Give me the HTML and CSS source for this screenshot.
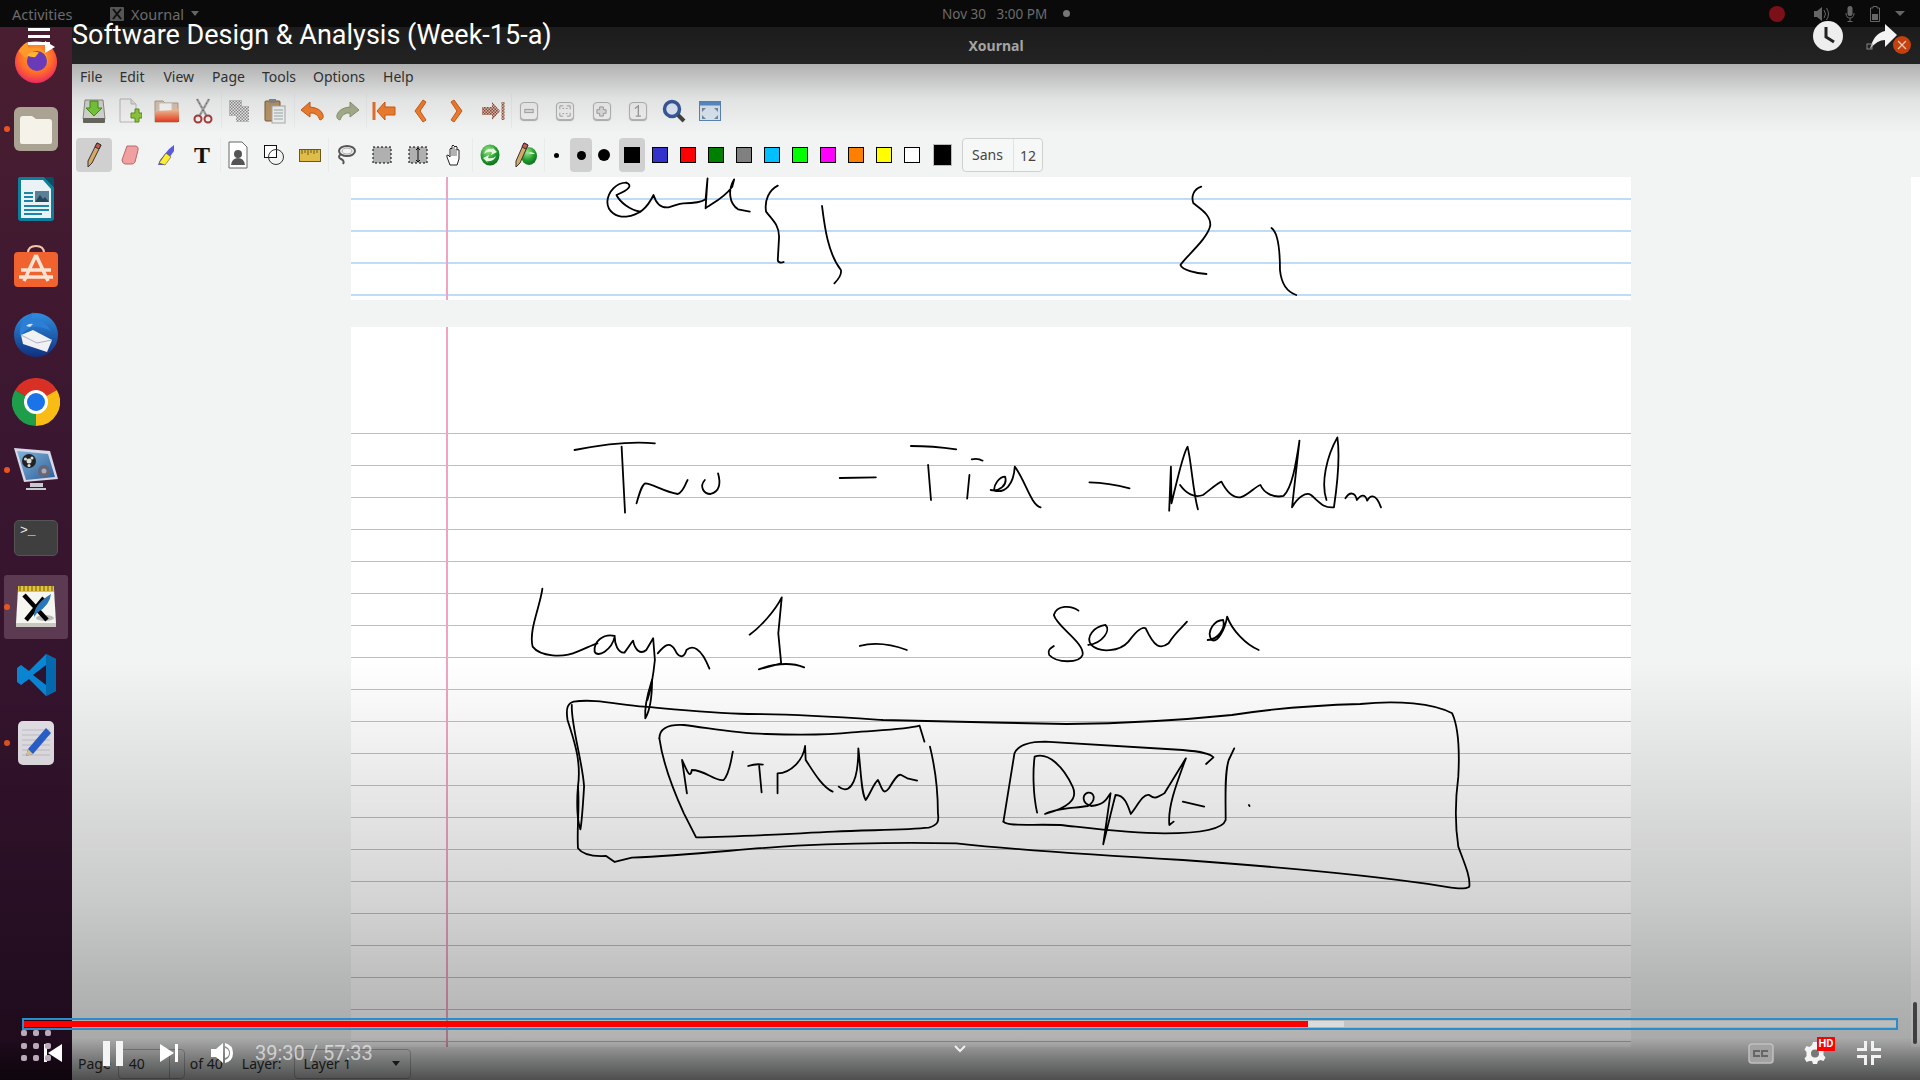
FILE: index.html
```html
<!DOCTYPE html>
<html lang="en">
<head>
    <meta charset="UTF-8">
    <title>Software Design &amp; Analysis (Week-15-a)</title>
    <link rel="stylesheet" href="styles.css">
</head>
<body>
    <svg class="defs">
        <defs>
            <pattern id="dither" width="3" height="3" patternUnits="userSpaceOnUse">
                <rect width="3" height="3" fill="#ececec"/>
                <rect width="1.5" height="1.5" fill="#8c8c8c"/>
                <rect x="1.5" y="1.5" width="1.5" height="1.5" fill="#8c8c8c"/>
            </pattern>
            <pattern id="ditherRed" width="3" height="3" patternUnits="userSpaceOnUse">
                <rect width="3" height="3" fill="#d9c0b0"/>
                <rect width="1.5" height="1.5" fill="#8c4a3a"/>
                <rect x="1.5" y="1.5" width="1.5" height="1.5" fill="#8c4a3a"/>
            </pattern>
            <radialGradient id="fox" cx="50%" cy="38%" r="65%">
                <stop offset="0" stop-color="#ffb52e"/>
                <stop offset=".6" stop-color="#ff6a2a"/>
                <stop offset="1" stop-color="#e8206a"/>
            </radialGradient>
            <radialGradient id="orb" cx="40%" cy="30%" r="75%">
                <stop offset="0" stop-color="#9fe58a"/>
                <stop offset=".6" stop-color="#1f9a2e"/>
                <stop offset="1" stop-color="#0c6a1c"/>
            </radialGradient>
            <linearGradient id="bird" x1="0" y1="0" x2="0" y2="1">
                <stop offset="0" stop-color="#2f8fe0"/>
                <stop offset="1" stop-color="#10307f"/>
            </linearGradient>
            <linearGradient id="folder" x1="0" y1="0" x2="0" y2="1">
                <stop offset="0" stop-color="#f8c8a0"/>
                <stop offset="1" stop-color="#e6391c"/>
            </linearGradient>
            <linearGradient id="screen" x1="0" y1="0" x2="1" y2="1">
                <stop offset="0" stop-color="#7fb4dc"/>
                <stop offset="1" stop-color="#2f5f98"/>
            </linearGradient>
        </defs>
    </svg>

    <div class="panel">
        <span class="panel-activities">Activities</span>
        <span class="panel-app">
            <svg width="14" height="14" viewBox="0 0 14 14"><rect width="14" height="14" rx="1" fill="#555"/><path d="M3 2l8 10M11 2L3 12" stroke="#111" stroke-width="2"/></svg>
            Xournal
            <i class="caret"></i>
        </span>
        <span class="panel-clock">Nov 30&nbsp;&nbsp;&nbsp;3:00 PM<i class="clock-dot"></i></span>
        <span class="panel-tray">
            <i class="rec-dot"></i>
            <svg width="16" height="14" viewBox="0 0 16 14"><path d="M0 4h3l5-4v14l-5-4H0z" fill="#666"/><path d="M10 3q3 4 0 8M12.500 1q4 6 0 12" fill="none" stroke="#666"/></svg>
            <svg width="10" height="16" viewBox="0 0 10 16"><rect x="2.500" width="5" height="10" rx="2.500" fill="#666"/><path d="M1 7q0 5 4 5t4-5M5 12v3M2.500 15.500h5" fill="none" stroke="#666"/></svg>
            <svg width="10" height="16" viewBox="0 0 10 16"><path d="M3 .5h4v1.500h2.500v13.500H.5V2H3z" fill="none" stroke="#666"/><rect x="2" y="8" width="6" height="6" fill="#666"/></svg>
            <i class="caret tray-caret"></i>
        </span>
    </div>

    <div class="desktop">
        <div class="dock">
            <div class="dock-item">
                <svg width="46" height="46" viewBox="0 0 48 48"><circle cx="24" cy="25" r="22" fill="url(#fox)"/><path d="M6 14q4-8 10-10-2 5 2 7 8-2 13 2 6 5 5 13l-10-8-14 2z" fill="#ff9a2a"/><circle cx="25" cy="24" r="10.500" fill="#6a3ab8"/><path d="M14 18q6-5 13-3l-4 5q-5 0-9-2z" fill="#ffb52e"/></svg>
            </div>
            <div class="dock-item running">
                <svg width="46" height="46" viewBox="0 0 46 46"><rect x="1" y="1" width="44" height="44" rx="6" fill="#aaa393"/><path d="M7 13q0-3 3-3h9l4 3h13q3 0 3 3v20q0 2-2 2H9q-2 0-2-2z" fill="#f5f2ea"/></svg>
            </div>
            <div class="dock-item">
                <svg class="nudge-down" width="38" height="46" viewBox="0 0 38 46"><path d="M3 1h24l10 10v31q0 3-3 3H4q-3 0-3-3V3q0-2 2-2z" fill="#0f7d9c"/><path d="M28 1h7q2 0 2 2v8z" fill="#0b4f66"/><path d="M4 4h22l8 9v29H4z" fill="#eaf2f6"/><path d="M7 17h9M7 21h9M7 25h9M7 30h25M7 34h25M7 38h18" stroke="#1c86a8" stroke-width="2"/><rect x="18" y="15" width="14" height="11" fill="#5a7f96"/><path d="M18 26l5-7 3 4 2-2 4 5z" fill="#26485c"/></svg>
            </div>
            <div class="dock-item">
                <svg width="46" height="46" viewBox="0 0 46 46"><path d="M15 10q0-7 8-7t8 7" fill="none" stroke="#f3c6a8" stroke-width="2"/><rect x="1" y="9" width="44" height="35" rx="4" fill="#f0622e"/><path d="M23 12L11 38M23 12l12 26M8 27h30M6 34h34" fill="none" stroke="#fce3d4" stroke-width="3.500"/></svg>
            </div>
            <div class="dock-item">
                <svg width="48" height="48" viewBox="0 0 48 48"><circle cx="24" cy="25" r="22" fill="url(#bird)"/><path d="M8 26Q6 10 22 2q-4 5-2 7 12 0 19 12-12-6-20-4-5 3-11 9z" fill="#2b7fd6"/><path d="M14 16q3-3 7-2l-3 3z" fill="#cfe4f8"/><path d="M9 25l12-5 19 10-5 12-24-8z" fill="#f1f1f4"/><path d="M9 25l16 8 15-3" fill="none" stroke="#aab0c4"/></svg>
            </div>
            <div class="dock-item">
                <svg width="48" height="48" viewBox="0 0 48 48"><path d="M24 24L3.200 12A24 24 0 0 1 44.800 12z" fill="#d93025"/><path d="M24 24L44.800 12A24 24 0 0 1 24 48z" fill="#f9bc15"/><path d="M24 24L24 48A24 24 0 0 1 3.200 12z" fill="#1e9e4a"/><circle cx="24" cy="24" r="12" fill="#fff"/><circle cx="24" cy="24" r="9" fill="#1a73e8"/></svg>
            </div>
            <div class="dock-item running">
                <svg width="46" height="46" viewBox="0 0 46 46"><path d="M1 1l36 3 8 28-34 3z" fill="#d8d8e8"/><path d="M4 4l31 3 7 23-29 3z" fill="url(#screen)"/><circle cx="16" cy="14" r="7" fill="#222"/><circle cx="16" cy="14" r="2.500" fill="#ddd"/><circle cx="12.500" cy="12" r="1.500" fill="#ddd"/><circle cx="19" cy="11" r="1.500" fill="#ddd"/><circle cx="16" cy="18.500" r="1.500" fill="#ddd"/><circle cx="31" cy="24" r="6" fill="#667"/><circle cx="31" cy="24" r="2.500" fill="#aab"/><path d="M17 36h13v4H17zM13 41h20v2H13z" fill="#c8c8d0"/></svg>
            </div>
            <div class="dock-item">
                <div class="terminal-icon">&gt;_</div>
            </div>
            <div class="dock-item running selected">
                <svg width="42" height="44" viewBox="0 0 42 44"><path d="M3 4h36l2 34H1z" fill="#f6f6f0"/><path d="M1 38h40v4H1z" fill="#c8c8c0"/><rect x="3" y="1" width="36" height="6" fill="#e4c43a"/><path d="M5 1v5M9 1v5M13 1v5M17 1v5M21 1v5M25 1v5M29 1v5M33 1v5M37 1v5" stroke="#6a5a10"/><ellipse cx="30" cy="33" rx="9" ry="3" fill="#bbb"/><path d="M9 10l23 25M29 13L11 35" stroke="#000" stroke-width="4.500"/><path d="M36 9q-1 11-14 19l-3 4q-1-12 17-23z" fill="#2a76b8"/></svg>
            </div>
            <div class="dock-item">
                <svg width="44" height="44" viewBox="0 0 44 44"><path d="M32 1l10 5v32l-10 5-17-17-8 6-4-3V15l4-3 8 6z" fill="#0a86d4"/><path d="M32 1l10 5v32l-10 5z" fill="#0569b0"/><path d="M32 12L19 22l13 10z" fill="#2c1430"/></svg>
            </div>
            <div class="dock-item running">
                <svg width="38" height="46" viewBox="0 0 38 46"><rect x="1" y="1" width="36" height="44" rx="5" fill="#e8e6ea"/><path d="M5 10h28M5 15h28M5 20h28M5 25h28M5 30h28M5 35h28" stroke="#c4c4cc"/><path d="M29 8l5 5-18 21-7 2 2-7z" fill="#2a62d0"/><path d="M11 29l-2 7 7-2z" fill="#e8c89a"/></svg>
            </div>
        </div>

        <div class="window">
            <div class="titlebar">Xournal</div>

            <div class="menubar">
                <span>File</span><span>Edit</span><span>View</span><span>Page</span><span>Tools</span><span>Options</span><span>Help</span>
            </div>

            <div class="toolbar toolbar-main">
                <div class="tool"><svg width="26" height="26" viewBox="0 0 26 26"><path d="M4 2h18l2 19H2z" fill="#d4d6d0" stroke="#8a8a84"/><rect x="2" y="20" width="22" height="5" rx="1" fill="#66665f"/><path d="M9 3h8v7h4l-8 8-8-8h4z" fill="#76c83a" stroke="#4a8a1c"/></svg></div>
                <div class="tool"><svg width="24" height="26" viewBox="0 0 24 26"><path d="M2 1h11l5 5v18H2z" fill="#f2f2f2" stroke="#b8b8b8"/><path d="M13 1v5h5" fill="#ddd" stroke="#b8b8b8"/><path d="M13 15h4v-4h4v4h3v5h-3v4h-4v-4h-4z" fill="#8cc83c" stroke="#5c8c1c"/></svg></div>
                <div class="tool"><svg width="26" height="24" viewBox="0 0 26 24"><path d="M1 2h8l2 2h13v19H1z" fill="#d8c4b0" stroke="#b89a80"/><rect x="5" y="4" width="13" height="12" fill="#f8f8f8" stroke="#ccc"/><path d="M1 12l19-1 5-1v13H1z" fill="url(#folder)"/></svg></div>
                <div class="tool group-end"><svg width="20" height="26" viewBox="0 0 20 26"><path d="M4 1l9 16M16 1L7 17" stroke="#aaa" stroke-width="2.500"/><path d="M4 1l9 16M16 1L7 17" stroke="#777" stroke-width="1" stroke-dasharray="2 2"/><circle cx="5" cy="21" r="3.500" fill="none" stroke="#a83a3a" stroke-width="2"/><circle cx="15" cy="21" r="3.500" fill="none" stroke="#a83a3a" stroke-width="2"/></svg></div>
                <div class="tool"><svg width="22" height="24" viewBox="0 0 22 24"><rect x="1" y="1" width="13" height="16" fill="url(#dither)"/><rect x="8" y="7" width="13" height="16" fill="url(#dither)"/></svg></div>
                <div class="tool group-end"><svg width="22" height="26" viewBox="0 0 22 26"><rect x="1" y="3" width="15" height="20" rx="1" fill="#b89468" stroke="#7a5a38"/><rect x="5" y="1" width="7" height="4" fill="#888"/><rect x="8" y="8" width="13" height="17" fill="#f2f2f2" stroke="#aaa"/><path d="M10 12h9M10 15h9M10 18h9M10 21h9" stroke="#9aa"/></svg></div>
                <div class="tool"><svg width="24" height="20" viewBox="0 0 24 20"><path d="M10 1L1 9l9 7v-4q7-1 10 7 4-1 3-5-2-7-13-8z" fill="#f08030" stroke="#c85a14"/></svg></div>
                <div class="tool group-end"><svg width="24" height="20" viewBox="0 0 24 20"><path d="M14 1l9 8-9 7v-4q-7-1-10 7-4-1-3-5 2-7 13-8z" fill="#a6b08c" stroke="#8a9470"/></svg></div>
                <div class="tool"><svg width="24" height="20" viewBox="0 0 24 20"><path d="M2 1v18" stroke="#e8702a" stroke-width="3"/><path d="M13 1L5 10l8 9v-5h10V6H13z" fill="#f08030" stroke="#d05a14"/></svg></div>
                <div class="tool"><svg width="14" height="24" viewBox="0 0 14 24"><path d="M10 1L2 12l8 11 3-2-6-9 6-9z" fill="#f08030" stroke="#d05a14"/></svg></div>
                <div class="tool"><svg width="14" height="24" viewBox="0 0 14 24"><path d="M4 1l8 11-8 11-3-2 6-9-6-9z" fill="#f08030" stroke="#d05a14"/></svg></div>
                <div class="tool group-end"><svg width="24" height="20" viewBox="0 0 24 20"><path d="M22 1v18" stroke="url(#ditherRed)" stroke-width="3"/><path d="M11 1l8 9-8 9v-5H1V6h10z" fill="url(#ditherRed)"/></svg></div>
                <div class="tool"><div class="zoom-btn"><svg width="10" height="10" viewBox="0 0 12 12"><rect x="1" y="4" width="10" height="4" fill="#ddd" stroke="#999"/></svg></div></div>
                <div class="tool"><div class="zoom-btn"><svg width="12" height="12" viewBox="0 0 14 14"><path d="M1 5V1h4M9 1h4v4M13 9v4H9M5 13H1V9M4 4h2M8 4h2M4 10h2M8 10h2" fill="none" stroke="#999"/></svg></div></div>
                <div class="tool"><div class="zoom-btn"><svg width="11" height="11" viewBox="0 0 12 12"><path d="M4 1h4v3h3v4H8v3H4V8H1V4h3z" fill="#ddd" stroke="#999"/></svg></div></div>
                <div class="tool"><div class="zoom-btn"><svg width="9" height="12" viewBox="0 0 10 14"><path d="M2 4l4-3v12M3 13h6" fill="none" stroke="#999" stroke-width="1.500"/></svg></div></div>
                <div class="tool"><svg width="24" height="24" viewBox="0 0 24 24"><circle cx="10" cy="10" r="7.500" fill="#dfe8f6" stroke="#3a5a9c" stroke-width="3.500"/><path d="M16 16l6 6" stroke="#444" stroke-width="4"/></svg></div>
                <div class="tool"><svg width="22" height="20" viewBox="0 0 22 20"><rect x=".5" y=".5" width="21" height="19" fill="#dbe6f2" stroke="#5a84b8"/><rect x=".5" y=".5" width="21" height="4" fill="#5a8cc8"/><path d="M3 7l4 0-4 4zM19 7l-4 0 4 4zM3 18l0-4 4 4zM19 18l0-4-4 4z" fill="#7a8a98"/></svg></div>
            </div>

            <div class="toolbar toolbar-draw">
                <div class="tool active"><svg width="16" height="26" viewBox="0 0 16 26"><path d="M11 1l4 2-9 18-4 4 0-6z" fill="#d8a868" stroke="#333"/><path d="M11 1l4 2-2 4-4-2z" fill="#c85a50" stroke="#333"/></svg></div>
                <div class="tool"><svg width="18" height="20" viewBox="0 0 18 20"><path d="M6 1h9q3 1 2 4l-3 12q-1 2-3 2H4q-3-1-3-4z" fill="#f0a0a0" stroke="#b86868"/></svg></div>
                <div class="tool"><svg width="18" height="22" viewBox="0 0 18 22"><path d="M12 5l5-4v6L7 21H1l2-5z" fill="#5a5ae0"/><path d="M9 9l5 4-6 8-6-2z" fill="#ffee30" stroke="#333" stroke-width=".5"/></svg></div>
                <div class="tool group-end"><span class="text-tool">T</span></div>
                <div class="tool"><svg width="20" height="28" viewBox="0 0 20 28"><path d="M1 1h13l5 5v21H1z" fill="#fff" stroke="#666"/><circle cx="10" cy="13" r="4" fill="#555"/><path d="M3 24q1-7 7-7t7 7z" fill="#555"/></svg></div>
                <div class="tool"><svg width="20" height="20" viewBox="0 0 20 20"><rect x=".5" y=".5" width="12" height="12" fill="#fff" stroke="#111"/><circle cx="12" cy="12" r="7.500" fill="none" stroke="#333"/></svg></div>
                <div class="tool group-end"><svg width="22" height="13" viewBox="0 0 22 13"><rect x=".5" y=".5" width="21" height="12" fill="#e0bc48" stroke="#6a5a18"/><path d="M3 1v4M6 1v3M9 1v5M12 1v3M15 1v4M18 1v3" stroke="#6a5a18"/></svg></div>
                <div class="tool"><svg width="20" height="22" viewBox="0 0 20 22"><ellipse cx="11" cy="7" rx="8" ry="5" fill="none" stroke="#555" stroke-width="2"/><ellipse cx="11" cy="7" rx="5" ry="3" fill="none" stroke="#aaa"/><path d="M5 10q-4 3 0 5t2 5" fill="none" stroke="#555" stroke-width="2"/></svg></div>
                <div class="tool"><svg width="20" height="18" viewBox="0 0 20 18"><rect x="1" y="1" width="18" height="16" fill="#b0b0b0" stroke="#000" stroke-dasharray="2 2"/></svg></div>
                <div class="tool"><svg width="20" height="18" viewBox="0 0 20 18"><rect x="1" y="1" width="18" height="16" fill="#b0b0b0" stroke="#000" stroke-dasharray="2 2" stroke-width="1"/><path d="M10 2v14M8 4l2-2 2 2M8 14l2 2 2-2" fill="none" stroke="#111"/></svg></div>
                <div class="tool group-end"><svg width="16" height="22" viewBox="0 0 16 22"><path d="M4 21l-3-8q-1-2 1-2l2 2V5q1-2 2 0V2q1-2 2 0l1 1q1-2 2 0v3q1-1 2 0v9l-2 6z" fill="#fff" stroke="#222"/><path d="M6 5v7M8 3v9M10 5v7" stroke="#222" stroke-width=".7"/></svg></div>
                <div class="tool"><svg width="20" height="22" viewBox="0 0 20 22"><ellipse cx="10" cy="11" rx="9.500" ry="10.500" fill="url(#orb)"/><path d="M4 10q2-6 9-5l-1-2 5 5-6 3 1-3q-5-1-8 2zM16 12q-2 6-9 5l1 2-5-5 6-3-1 3q5 1 8-2z" fill="#e8f8e0"/></svg></div>
                <div class="tool group-end"><svg width="22" height="26" viewBox="0 0 22 26"><ellipse cx="14" cy="14" rx="8" ry="9" fill="url(#orb)"/><path d="M13 11q4-2 7 1l-3 0q-2 0-4-1z" fill="#e8f8e0"/><path d="M9 1l4 2-8 18-4 4 0-6z" fill="#d8a868" stroke="#333"/><path d="M9 1l4 2-2 4-4-2z" fill="#c85a50" stroke="#333"/></svg></div>
                <div class="thickness thin"><i></i></div>
                <div class="thickness medium active"><i></i></div>
                <div class="thickness thick"><i></i></div>
                <div class="swatch-box active"><i class="swatch black"></i></div>
                <i class="swatch blue"></i>
                <i class="swatch red"></i>
                <i class="swatch green"></i>
                <i class="swatch gray"></i>
                <i class="swatch cyan"></i>
                <i class="swatch lime"></i>
                <i class="swatch magenta"></i>
                <i class="swatch orange"></i>
                <i class="swatch yellow"></i>
                <i class="swatch white"></i>
                <i class="swatch-custom"></i>
                <div class="font-btn"><span class="font-name">Sans</span><span class="font-size">12</span></div>
            </div>

            <div class="canvas">
                <div class="page page-top"><div class="ruled"></div></div>
                <div class="page page-main"><div class="ruled"></div></div>
                <div class="scroll-track"><i class="scroll-thumb"></i></div>
            </div>

            <div class="statusbar">
                <span class="status-label">Page</span>
                <div class="spin"><span>40</span><i class="spin-arrows"></i></div>
                <span class="status-of">of 40</span>
                <span class="status-layer">Layer:</span>
                <div class="combo"><span>Layer 1</span><i class="caret combo-caret"></i></div>
            </div>
        </div>
    </div>

    <!-- handwriting, in the coordinates of the screen -->
    <svg class="ink" viewBox="0 0 1920 1080">
        <g transform="translate(340 170) scale(.6505 .3333)">
            <path d="M440 38C425 38 412 65 411 95C411 125 425 142 440 140C460 135 472 115 482 75C485 95 492 115 505 112C515 108 520 100 528 100C540 100 555 98 562 88L565 25L562 115C568 105 590 85 603 50L606 28C596 60 598 100 612 118L630 125"/>
            <path d="M440 38C450 45 445 60 425 75C430 95 445 120 462 125"/>
            <path d="M673 47C660 60 652 90 655 125C665 150 675 165 675 200L673 270C673 280 680 278 682 276"/>
            <path d="M741 108C745 170 750 250 770 300C772 315 765 330 760 340"/>
            <path d="M1324 50C1312 58 1308 80 1312 100C1325 120 1338 135 1338 165C1335 205 1300 260 1292 285C1295 300 1315 310 1332 312"/>
            <path d="M1432 174C1440 185 1445 220 1445 300C1447 340 1455 365 1470 375"/>
        </g>
        <g transform="translate(520 420) scale(.574 .3333)">
            <path d="M95 90C130 78 190 62 235 70"/>
            <path d="M177 80L183 278"/>
            <path d="M203 250C208 220 212 195 218 190C230 190 250 215 275 222C285 215 287 195 292 180"/>
            <path d="M322 180C312 200 320 222 332 222C348 215 350 190 345 160"/>
            <path d="M557 174L620 172"/>
            <path d="M681 78C710 78 735 82 760 88"/>
            <path d="M711 135L716 240"/>
            <path d="M783 165L779 236"/>
            <path d="M787 118C795 115 802 118 806 122"/>
            <path d="M820 210C835 215 850 195 845 170C835 170 825 195 826 212C845 220 860 195 862 140C880 180 890 255 907 262"/>
            <path d="M992 187C1015 188 1040 195 1062 205"/>
            <path d="M1131 272L1134 140L1135 250C1145 180 1155 100 1163 80C1170 130 1172 210 1181 268"/>
            <path d="M1150 195C1160 220 1175 235 1190 225C1205 205 1215 190 1222 185C1228 205 1240 235 1255 232C1270 225 1280 200 1290 195C1295 215 1310 235 1330 228C1345 205 1352 130 1358 62L1345 262C1355 230 1370 215 1378 225C1395 250 1400 265 1418 262C1425 180 1428 100 1424 52C1405 110 1395 190 1405 240"/>
            <path d="M1438 235C1445 215 1455 215 1458 240C1465 225 1472 220 1476 242C1480 228 1490 215 1500 262"/>
            <path d="M39 506C35 560 15 630 22 680C35 710 75 715 100 695C115 685 125 675 135 670"/>
            <path d="M165 648C145 640 128 665 130 695C135 715 160 690 165 650C165 670 170 700 182 698C190 680 195 665 197 662C200 690 210 705 220 690L232 655L235 720C232 770 228 810 222 840"/>
            <path d="M240 700C250 680 260 660 270 690C275 710 285 720 290 690C300 675 315 680 330 746"/>
            <path d="M400 644C420 620 445 570 456 532L450 640L455 730L416 748C445 730 470 725 495 742"/>
            <path d="M592 678C620 665 650 675 674 690"/>
            <path d="M973 572C960 555 935 555 930 585C935 620 985 670 980 705C975 730 935 730 922 705C918 690 925 685 930 678"/>
            <path d="M990 675C1015 670 1030 630 1020 615C1000 620 985 650 995 675C1010 700 1045 695 1060 665C1075 630 1085 620 1090 625C1105 680 1115 690 1130 670C1140 640 1155 620 1162 605"/>
            <path d="M1198 660C1215 660 1230 625 1225 600C1210 600 1195 635 1205 660C1215 670 1228 630 1232 590C1240 630 1265 675 1287 690"/>
        </g>
        <g transform="translate(540 680) scale(.6122 .3333)">
            <path d="M183 0C178 30 170 70 172 115C180 90 183 40 183 0"/>
            <path d="M55 65C90 55 130 75 170 80C230 90 280 100 340 102C420 102 480 110 560 120C650 125 760 128 860 132C980 130 1050 120 1130 105C1200 85 1280 75 1340 72C1400 60 1460 70 1490 100C1500 140 1502 220 1500 290C1495 360 1495 440 1500 500C1510 550 1520 590 1518 620C1510 630 1490 625 1450 612C1350 585 1200 560 1050 540C900 525 780 510 680 490C600 487 500 490 420 497C340 505 250 525 150 533L122 546L108 528C90 530 70 525 62 505C60 440 65 380 62 320C68 240 55 180 45 120C42 85 45 70 55 65"/>
            <path d="M52 75C50 130 70 250 72 320C70 380 68 430 66 448C60 420 60 360 62 320"/>
            <path d="M195 175C195 150 205 132 235 135C280 145 320 160 370 162C420 165 470 165 510 157C560 150 600 148 620 137L628 185"/>
            <path d="M195 175C200 240 215 320 235 400L255 472C330 470 400 462 480 455C540 450 600 450 635 443C650 435 652 425 650 400C650 330 645 260 637 200"/>
            <path d="M240 340L232 240C240 270 245 300 248 270C270 270 285 305 300 300C310 280 312 240 315 215"/>
            <path d="M340 258C350 252 358 252 364 254"/>
            <path d="M358 258L362 337"/>
            <path d="M388 340L388 280C410 280 430 240 433 198L434 240C445 270 460 320 478 335"/>
            <path d="M488 320C500 340 520 330 520 205C525 290 525 340 532 360C540 340 545 310 552 300C558 320 560 350 570 325C578 300 585 280 590 285L600 295L616 302"/>
            <path d="M757 425L775 220C780 200 795 185 825 185C880 190 960 200 1050 210C1080 215 1095 220 1100 232L1088 252"/>
            <path d="M757 425C765 440 800 432 850 435C900 445 960 460 1020 460C1070 460 1115 450 1120 420C1120 350 1118 280 1125 240L1134 205"/>
            <path d="M812 398C805 340 805 270 808 230C830 215 855 260 870 320C880 360 860 385 825 402C840 385 870 385 895 378C910 360 905 335 895 338C885 345 885 370 900 378C920 375 925 360 930 345L932 340L920 493C930 420 935 380 940 345C955 345 960 375 965 402C975 380 985 340 995 345C1005 360 1010 350 1020 340L1055 235C1040 310 1025 380 1028 435L1035 425"/>
            <path d="M1050 365L1085 380"/>
            <path d="M1158 375L1159 378"/>
        </g>
    </svg>

    <!-- video player controls, over the recording -->
    <div class="shade-top"></div>
    <div class="player-top">
        <div class="player-menu">
            <i></i><i></i><i></i>
            <svg class="menu-play" width="10" height="12" viewBox="0 0 10 12"><path d="M0 0l10 6-10 6z" fill="#fff"/></svg>
        </div>
        <div class="player-title">Software Design &amp; Analysis (Week-15-a)</div>
        <svg class="player-clock" width="30" height="30" viewBox="0 0 30 30"><circle cx="15" cy="15" r="15" fill="#eee"/><path d="M13 6v10l8 5" fill="none" stroke="#222" stroke-width="3"/></svg>
        <svg class="player-share" width="36" height="30" viewBox="0 0 36 30"><path d="M21 0L33 11L21 23V16Q13 16 6 25Q10 9 21 7Z" fill="#f4f4f4"/><rect x="3" y="20" width="5" height="5" fill="none" stroke="#888"/></svg>
        <div class="player-close">
            <svg width="10" height="10" viewBox="0 0 10 10"><path d="M1 1l8 8M9 1L1 9" stroke="#f0c8b0" stroke-width="1.300"/></svg>
        </div>
    </div>

    <div class="player-bottom">
        <div class="progress">
            <div class="progress-track">
                <div class="played" style="width: 68.6%"></div>
                <div class="buffered" style="width: 1.9%"></div>
            </div>
        </div>
        <div class="player-controls">
            <svg class="ctl-prev" width="18" height="18" viewBox="0 0 18 18"><rect width="3" height="18" fill="#fff"/><path d="M18 0v18L4 9z" fill="#fff"/></svg>
            <div class="ctl-pause"><i></i><i></i></div>
            <svg class="ctl-next" width="18" height="18" viewBox="0 0 18 18"><path d="M0 0v18l14-9z" fill="#fff"/><rect x="15" width="3" height="18" fill="#fff"/></svg>
            <svg class="ctl-volume" width="22" height="22" viewBox="0 0 22 22"><path d="M0 7h5l7-6v20l-7-6H0z" fill="#fff"/><path d="M14 1q8 2 8 10t-8 10v-3q5-2 5-7t-5-7zM14 6q4 1 4 5t-4 5z" fill="#fff"/></svg>
            <span class="ctl-time">39:30 / 57:33</span>
            <svg class="ctl-cc" width="26" height="21" viewBox="0 0 26 21"><rect x="1" y="1" width="24" height="19" rx="3" fill="#a2a2a2" stroke="#c0c0c0" stroke-width="1.500"/><path d="M12 8H6v5h6M20 8h-6v5h6" fill="none" stroke="#666" stroke-width="2"/></svg>
            <div class="ctl-settings">
                <svg width="24" height="24" viewBox="0 0 24 24"><path d="M10 1h4l1 3 2.500 1 3-1 2 3.500-2 2.500v4l2 2.500-2 3.500-3-1-2.500 1-1 3h-4l-1-3L6.500 20l-3 1-2-3.500 2-2.500v-4l-2-2.500 2-3.500 3 1L9 4z" fill="#f4f4f4"/><circle cx="12" cy="12.500" r="4" fill="#777"/></svg>
                <span class="hd-badge">HD</span>
            </div>
            <svg class="ctl-exit" width="24" height="24" viewBox="0 0 24 24"><path d="M7 0h3v10H0V7h7zM14 0h3v7h7v3H14zM0 14h10v10H7v-7H0zM14 14h10v3h-7v7h-3z" fill="#f2f2f2"/></svg>
        </div>
        <svg class="player-chevron" width="12" height="8" viewBox="0 0 12 8"><path d="M1 1l5 5 5-5" fill="none" stroke="#f0f0f0" stroke-width="2"/></svg>
        <div class="player-apps">
            <i></i><i></i><i></i><i></i><i></i><i></i><i></i><i></i><i></i>
        </div>
    </div>
</body>
</html>
```

FILE: styles.css
```css
* {
    box-sizing: border-box;
}
html, body {
    margin: 0;
    padding: 0;
}
body {
    position: relative;
    width: 1920px;
    height: 1080px;
    overflow: hidden;
    display: flex;
    flex-direction: column;
    font-family: "Noto Sans", Roboto, sans-serif;
    background-color: #000;
}
i {
    display: block;
}
.defs {
    position: absolute;
    width: 0;
    height: 0;
}

/* top bar of the desktop */
.panel {
    position: relative;
    flex: 0 0 27px;
    display: flex;
    align-items: center;
    background-color: #0a0a0a;
    color: #6c6c6c;
    font-size: 14.500px;
}
.panel-activities {
    margin-left: 12px;
    width: 98px;
}
.panel-app {
    display: flex;
    align-items: center;
    gap: 7px;
}
.caret {
    width: 0;
    height: 0;
    border-left: 4px solid transparent;
    border-right: 4px solid transparent;
    border-top: 5px solid #666;
}
.panel-clock {
    position: absolute;
    left: 942px;
    display: flex;
    align-items: center;
    font-size: 13.500px;
}
.clock-dot {
    width: 7px;
    height: 7px;
    margin-left: 16px;
    border-radius: 50%;
    background-color: #777;
}
.panel-tray {
    margin-left: auto;
    display: flex;
    align-items: center;
    margin-right: 15px;
}
.rec-dot {
    width: 16px;
    height: 16px;
    margin-right: 29px;
    border-radius: 50%;
    background-color: #7c1018;
}
.panel-tray svg {
    margin-right: 15px;
}
.tray-caret {
    border-left-width: 5px;
    border-right-width: 5px;
}

.desktop {
    flex: 1;
    display: flex;
    min-height: 0;
}

/* launcher */
.dock {
    flex: 0 0 72px;
    display: flex;
    flex-direction: column;
    background: linear-gradient(#4a1e30, #3a1630 40%, #2c1029);
}
.dock-item {
    position: relative;
    flex: 0 0 68.2px;
    display: flex;
    align-items: center;
    justify-content: center;
}
.dock-item.running::before {
    content: "";
    position: absolute;
    left: 4px;
    top: 31px;
    width: 6px;
    height: 6px;
    border-radius: 50%;
    background-color: #e95420;
}
.dock-item.selected {
    background-color: #5c3a52;
    margin: 2px 4px;
    flex-basis: 64.2px;
    border-radius: 3px;
}
.dock-item.selected::before {
    left: 0;
    top: 29px;
}
.nudge-down {
    margin-top: 3px;
}
.terminal-icon {
    width: 44px;
    height: 36px;
    padding-left: 5px;
    border-radius: 5px;
    background-color: #3f3f3f;
    border: 1px solid #555;
    color: #eee;
    font-family: "Liberation Mono", monospace;
    font-size: 13px;
    line-height: 20px;
}

/* xournal window */
.window {
    flex: 1;
    display: flex;
    flex-direction: column;
    min-width: 0;
    background-color: #f2f3f3;
}
.titlebar {
    flex: 0 0 37px;
    background: linear-gradient(#1c1c1c, #232323);
    color: #a4a4a4;
    font-size: 14px;
    font-weight: bold;
    text-align: center;
    line-height: 37px;
}
.menubar {
    flex: 0 0 26px;
    display: flex;
    align-items: center;
    padding-bottom: 2px;
    color: #3c3c3c;
    font-size: 14px;
}
.menubar span:nth-child(1) { margin-left: 8px; }
.menubar span:nth-child(2) { margin-left: 17px; }
.menubar span:nth-child(3) { margin-left: 19px; }
.menubar span:nth-child(4) { margin-left: 18px; }
.menubar span:nth-child(5) { margin-left: 17px; }
.menubar span:nth-child(6) { margin-left: 17px; }
.menubar span:nth-child(7) { margin-left: 18px; }

.toolbar {
    display: flex;
    align-items: center;
    padding-left: 4px;
}
.toolbar-main {
    flex: 0 0 42px;
}
.toolbar-draw {
    flex: 0 0 45px;
    padding-top: 6px;
    padding-bottom: 5px;
}
.tool {
    flex: 0 0 36.25px;
    height: 34px;
    display: flex;
    align-items: center;
    justify-content: center;
}
.toolbar-draw .tool {
    flex-basis: 36px;
}
.tool.group-end {
    box-shadow: 1px 0 0 #e9eaea;
}
.tool.active {
    background-color: #d0d0d0;
    border-radius: 4px;
}
.text-tool {
    font-family: "Liberation Serif", serif;
    font-weight: bold;
    font-size: 24px;
    line-height: 1;
    color: #111;
}
.zoom-btn {
    width: 18px;
    height: 18px;
    display: flex;
    align-items: center;
    justify-content: center;
    border: 1px solid #b4b4b4;
    border-radius: 4px;
    background-color: #f0f0f0;
    box-shadow: 0 1px 1px #aaa;
}
.thickness {
    height: 34px;
    display: flex;
    align-items: center;
    justify-content: center;
    border-radius: 4px;
}
.thickness i {
    border-radius: 50%;
    background-color: #000;
}
.thickness.thin {
    width: 18px;
    margin-left: 3px;
}
.thickness.thin i {
    width: 5px;
    height: 5px;
}
.thickness.medium {
    width: 22px;
    margin-left: 5px;
}
.thickness.medium i {
    width: 9px;
    height: 9px;
}
.thickness.thick {
    width: 24px;
}
.thickness.thick i {
    width: 12px;
    height: 12px;
}
.active.thickness, .swatch-box.active {
    background-color: #d0d0d0;
}
.swatch-box {
    width: 26px;
    height: 34px;
    margin-left: 3px;
    margin-right: 7px;
    display: flex;
    align-items: center;
    justify-content: center;
    border-radius: 4px;
}
.swatch {
    flex: 0 0 16px;
    width: 16px;
    height: 16px;
    margin-right: 12px;
    border: 1px solid #000;
}
.swatch-box .swatch {
    margin-right: 0;
}
.black { background-color: #000; }
.blue { background-color: #3333cc; }
.red { background-color: #ff0000; }
.green { background-color: #008000; }
.gray { background-color: #808080; }
.cyan { background-color: #00c0ff; }
.lime { background-color: #00ff00; }
.magenta { background-color: #ff00ff; }
.orange { background-color: #ff8000; }
.yellow { background-color: #ffff00; }
.white { background-color: #fff; }
.swatch-custom {
    flex: 0 0 19px;
    height: 22px;
    margin-left: 1px;
    background-color: #000;
    border: 1px solid #bbb;
}
.font-btn {
    display: flex;
    align-items: center;
    width: 81px;
    height: 34px;
    margin-left: 10px;
    border: 1px solid #d0d0d0;
    border-radius: 4px;
    background-color: #f6f7f7;
    color: #444;
    font-size: 14px;
}
.font-name {
    width: 51px;
    padding-left: 9px;
    border-right: 1px solid #e2e2e2;
    line-height: 32px;
}
.font-size {
    flex: 1;
    text-align: center;
}

/* pages */
.canvas {
    position: relative;
    flex: 1;
    min-height: 0;
    overflow: hidden;
    padding-left: 279px;
    display: flex;
    flex-direction: column;
    gap: 27px;
}
.page {
    position: relative;
    flex: 0 0 auto;
    width: 1280px;
    background-color: #fff;
    display: flex;
    flex-direction: column;
}
.page::after {
    content: "";
    position: absolute;
    left: 95px;
    top: 0;
    bottom: 0;
    width: 2px;
    background-color: #f0a4c2;
}
.page-top {
    height: 123px;
}
.page-top .ruled {
    margin-top: 21px;
    height: 100px;
    background: linear-gradient(#bfdcf6 2px, transparent 2px) 0 0 / 100% 32px;
}
.page-main {
    height: 730px;
}
.page-main .ruled {
    margin-top: 106px;
    flex: 1;
    background: linear-gradient(#9ccbe6 1.500px, transparent 1.500px) 0 0 / 100% 32px;
}
.scroll-track {
    position: absolute;
    top: 0;
    right: 0;
    bottom: 0;
    width: 9px;
    background-color: #fff;
}
.scroll-thumb {
    position: absolute;
    left: 2px;
    bottom: 3px;
    width: 4px;
    height: 42px;
    border-radius: 2px;
    background-color: #5a5a5a;
}

.statusbar {
    flex: 0 0 33px;
    display: flex;
    align-items: center;
    color: #333;
    font-size: 14px;
}
.status-label {
    margin-left: 6px;
}
.spin {
    position: relative;
    width: 67px;
    height: 30px;
    margin-left: 7px;
    padding-left: 10px;
    border: 1px solid #bbb;
    border-radius: 4px;
    line-height: 28px;
}
.spin-arrows {
    position: absolute;
    right: 14px;
    top: 0;
    bottom: 0;
    border-left: 1px solid #bbb;
}
.status-of {
    margin-left: 5px;
}
.status-layer {
    margin-left: 19px;
}
.combo {
    display: flex;
    align-items: center;
    justify-content: space-between;
    width: 117px;
    height: 30px;
    margin-left: 12px;
    padding: 0 10px 0 9px;
    border: 1px solid #bbb;
    border-radius: 4px;
}
.combo-caret {
    border-top-color: #333;
}

.ink {
    position: absolute;
    left: 0;
    top: 0;
    width: 1920px;
    height: 1080px;
}
.ink path {
    fill: none;
    stroke: #000;
    stroke-width: 1.800;
    stroke-linecap: round;
    stroke-linejoin: round;
    vector-effect: non-scaling-stroke;
}

/* player overlay */
.shade-top {
    position: absolute;
    left: 72px;
    top: 64px;
    width: 1848px;
    height: 70px;
    background: linear-gradient(rgba(0, 0, 0, 0.27), rgba(0, 0, 0, 0.07) 50%, rgba(0, 0, 0, 0));
}
.player-menu {
    position: absolute;
    left: 28px;
    top: 28px;
    width: 22px;
    display: flex;
    flex-direction: column;
    gap: 4px;
}
.player-menu i {
    height: 3px;
    background-color: #fff;
}
.menu-play {
    position: absolute;
    left: 17px;
    top: 13px;
}
.player-title {
    position: absolute;
    left: 72px;
    top: 16px;
    color: #fff;
    font-family: Roboto, sans-serif;
    font-size: 27px;
    line-height: 38px;
    white-space: nowrap;
}
.player-clock {
    position: absolute;
    left: 1813px;
    top: 21px;
}
.player-share {
    position: absolute;
    left: 1864px;
    top: 24px;
}
.player-close {
    position: absolute;
    left: 1893px;
    top: 36px;
    width: 18px;
    height: 18px;
    display: flex;
    align-items: center;
    justify-content: center;
    border-radius: 50%;
    background-color: #c4400f;
}
.player-bottom {
    position: absolute;
    left: 0;
    bottom: 0;
    width: 1920px;
    height: 420px;
    display: flex;
    flex-direction: column;
    justify-content: flex-end;
    padding-bottom: 4px;
    background: linear-gradient(rgba(0, 0, 0, 0), rgba(0, 0, 0, 0.17) 57%, rgba(0, 0, 0, 0.25) 76%, rgba(0, 0, 0, 0.3) 90%, rgba(0, 0, 0, 0.5) 95%, rgba(0, 0, 0, 0.68));
}
.progress {
    margin: 0 22px;
    height: 12px;
    border: 2px solid #2a8cc8;
}
.progress-track {
    display: flex;
    height: 6px;
    margin-top: 1px;
    background-color: rgba(255, 255, 255, 0.2);
}
.played {
    background-color: #f00;
}
.buffered {
    background-color: rgba(255, 255, 255, 0.4);
}
.player-controls {
    height: 46px;
    display: flex;
    align-items: center;
    padding-left: 44px;
    padding-right: 39px;
}
.ctl-pause {
    display: flex;
    gap: 6px;
    margin-left: 41px;
}
.ctl-pause i {
    width: 7px;
    height: 25px;
    background-color: #f4f4f4;
}
.ctl-next {
    margin-left: 37px;
}
.ctl-volume {
    margin-left: 33px;
}
.ctl-time {
    margin-left: 22px;
    color: rgba(255, 255, 255, 0.62);
    font-family: Roboto, sans-serif;
    font-size: 20px;
}
.ctl-cc {
    margin-left: auto;
}
.ctl-settings {
    position: relative;
    width: 24px;
    height: 24px;
    margin-left: 29px;
}
.hd-badge {
    position: absolute;
    left: 14px;
    top: -4px;
    width: 18px;
    height: 14px;
    background-color: #f00;
    color: #fff;
    font-family: Roboto, sans-serif;
    font-size: 11px;
    font-weight: bold;
    line-height: 14px;
    text-align: center;
}
.ctl-exit {
    margin-left: 30px;
}
.player-chevron {
    position: absolute;
    left: 954px;
    bottom: 27px;
}
.player-apps {
    position: absolute;
    left: 21px;
    bottom: 19px;
    display: grid;
    grid-template-columns: repeat(3, 6px);
    grid-auto-rows: 6px;
    gap: 6.500px 6px;
}
.player-apps i {
    border-radius: 2px;
    background-color: #b8aab8;
}
```
